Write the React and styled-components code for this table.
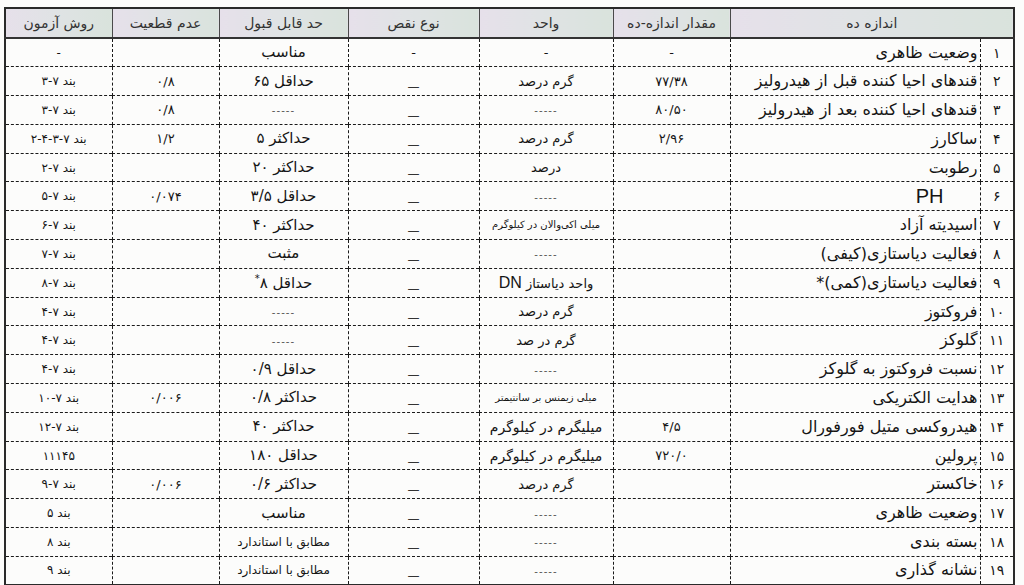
import React from "react";
import styled, { createGlobalStyle } from "styled-components";

const Global = createGlobalStyle`
  html, body { margin: 0; padding: 0; background: #fcfcfb; }
  body { font-family: "DejaVu Sans", "Liberation Sans", sans-serif; color: #151515; }
`;

const Page = styled.div`
  width: 1024px;
  height: 585px;
  padding: 7px 0 0 4px;
  box-sizing: border-box;
  overflow: hidden;
`;

const Table = styled.table`
  direction: rtl;
  width: 1009px;
  table-layout: fixed;
  border-collapse: collapse;
  border: 2px solid #2a2a2a;
`;

const HeadCell = styled.th`
  height: 28px;
  padding: 0;
  font-weight: normal;
  font-size: 14px;
  color: #333;
  text-align: center;
  border: 1px solid #4a4a4a;
  border-bottom: 2px solid #333;
  background: linear-gradient(90deg, #e6e0ea 0%, #dfe3e4 50%, #d9e3dc 100%);
`;

const Row = styled.tr`
  height: 28.8px;
`;

const Cell = styled.td`
  padding: 0 ${(p) => p.$pad || 0}px 0 0;
  border: 1.5px dashed #1a1a1a;
  text-align: ${(p) => p.$align || "center"};
  font-size: ${(p) => p.$size || 13}px;
  color: #151515;
  white-space: nowrap;
  overflow: hidden;
  vertical-align: middle;
  line-height: 1;
`;

const NumCell = styled(Cell)`
  text-align: center;
  font-size: 14px;
  padding: 0;
`;

const LowDash = styled.span`
  display: inline-block;
  padding-top: 12px;
  font-size: 12px;
  color: #333;
`;

const Dashes = styled.span`
  color: #555;
  font-size: 11px;
  letter-spacing: 1px;
  font-family: "Liberation Sans", sans-serif;
`;

const Latin = styled.span`
  font-family: "Liberation Sans", sans-serif;
  font-size: ${(p) => p.$size || 14}px;
  display: inline-block;
  margin-right: ${(p) => p.$shift || 0}px;
`;

const Sup = styled.sup`
  font-size: 10px;
`;

const D = "-----";

const rows = [
  ["۱", "وضعیت ظاهری", "-", "-", "top", "مناسب", "", "-"],
  ["۲", "قندهای احیا کننده قبل از هیدرولیز", "۷۷/۳۸", "گرم درصد", "_", "حداقل ۶۵", "۰/۸", "بند ۷-۳"],
  ["۳", "قندهای احیا کننده بعد از هیدرولیز", "۸۰/۵۰", D, "_", D, "۰/۸", "بند ۷-۳"],
  ["۴", "ساکارز", "۲/۹۶", "گرم درصد", "_", "حداکثر ۵", "۱/۲", "بند ۷-۳-۴-۲"],
  ["۵", "رطوبت", "", "درصد", "_", "حداکثر ۲۰", "", "بند ۷-۲"],
  ["۶", "PH", "", D, "_", "حداقل ۳/۵", "۰/۰۷۴", "بند ۷-۵"],
  ["۷", "اسیدیته آزاد", "", "small:میلی اکی‌والان در کیلوگرم", "_", "حداکثر ۴۰", "", "بند ۷-۶"],
  ["۸", "فعالیت دیاستازی(کیفی)", "", D, "_", "مثبت", "", "بند ۷-۷"],
  ["۹", "فعالیت دیاستازی(کمی)*", "", "dn", "_", "star", "", "بند ۷-۸"],
  ["۱۰", "فروکتوز", "", "گرم درصد", "_", D, "", "بند ۷-۴"],
  ["۱۱", "گلوکز", "", "گرم در صد", "_", D, "", "بند ۷-۴"],
  ["۱۲", "نسبت فروکتوز به گلوکز", "", D, "_", "حداقل ۰/۹", "", "بند ۷-۴"],
  ["۱۳", "هدایت الکتریکی", "", "small:میلی زیمنس بر سانتیمتر", "_", "حداکثر ۰/۸", "۰/۰۰۶", "بند ۷-۱۰"],
  ["۱۴", "هیدروکسی متیل فورفورال", "۴/۵", "big:میلیگرم در کیلوگرم", "_", "حداکثر ۴۰", "", "بند ۷-۱۲"],
  ["۱۵", "پرولین", "۷۲۰/۰", "big:میلیگرم در کیلوگرم", "_", "حداقل ۱۸۰", "", "۱۱۱۴۵"],
  ["۱۶", "خاکستر", "", "گرم درصد", "_", "حداکثر ۰/۶", "۰/۰۰۶", "بند ۷-۹"],
  ["۱۷", "وضعیت ظاهری", "", D, "_", "مناسب", "", "بند ۵"],
  ["۱۸", "بسته بندی", "", D, "_", "small:مطابق با استاندارد", "", "بند ۸"],
  ["۱۹", "نشانه گذاری", "", D, "_", "small:مطابق با استاندارد", "", "بند ۹"],
];

function content(v) {
  if (v === D) return <Dashes>{D}</Dashes>;
  if (v === "_") return <LowDash>—</LowDash>;
  if (v === "top") return <span>-</span>;
  if (v === "PH") return <Latin $size={20} $shift={34}>PH</Latin>;
  if (v === "dn")
    return (
      <span>
        واحد دیاستاز <Latin $size={16}>DN</Latin>
      </span>
    );
  if (v === "star")
    return (
      <span>
        حداقل ۸<Sup>*</Sup>
      </span>
    );
  return v;
}

function sizeOf(v, base) {
  if (typeof v === "string" && v.startsWith("small:")) return [v.slice(6), base - 3];
  if (typeof v === "string" && v.startsWith("big:")) return [v.slice(4), base + 1];
  return [v, base];
}

export default function App() {
  return (
    <Page>
      <Global />
      <Table>
        <colgroup>
          <col style={{ width: 34 }} />
          <col style={{ width: 250 }} />
          <col style={{ width: 117 }} />
          <col style={{ width: 134 }} />
          <col style={{ width: 131 }} />
          <col style={{ width: 129 }} />
          <col style={{ width: 107 }} />
          <col style={{ width: 107 }} />
        </colgroup>
        <thead>
          <tr>
            <HeadCell colSpan={2}>اندازه ده</HeadCell>
            <HeadCell>مقدار اندازه-ده</HeadCell>
            <HeadCell>واحد</HeadCell>
            <HeadCell>نوع نقص</HeadCell>
            <HeadCell>حد قابل قبول</HeadCell>
            <HeadCell>عدم قطعیت</HeadCell>
            <HeadCell>روش آزمون</HeadCell>
          </tr>
        </thead>
        <tbody>
          {rows.map((r) => {
            const [unit, unitSize] = sizeOf(r[3], 13);
            const [limit, limitSize] = sizeOf(r[5], 15);
            return (
              <Row key={r[0]}>
                <NumCell>{r[0]}</NumCell>
                <Cell $align="right" $pad={2} $size={16}>
                  {content(r[1])}
                </Cell>
                <Cell $size={13}>{content(r[2])}</Cell>
                <Cell $size={unitSize}>{content(unit)}</Cell>
                <Cell>{content(r[4])}</Cell>
                <Cell $size={limitSize}>{content(limit)}</Cell>
                <Cell $size={13}>{content(r[6])}</Cell>
                <Cell $size={12}>{content(r[7])}</Cell>
              </Row>
            );
          })}
        </tbody>
      </Table>
    </Page>
  );
}
